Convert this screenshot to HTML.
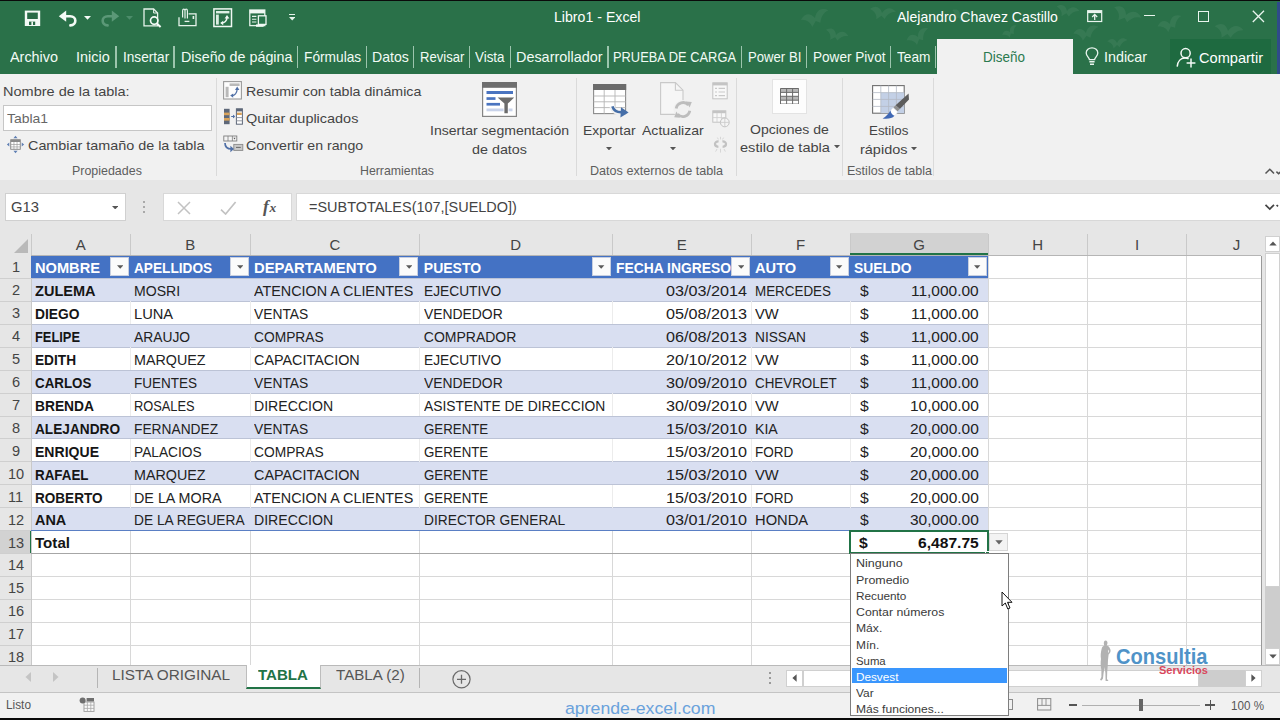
<!DOCTYPE html>
<html lang="es"><head><meta charset="utf-8"><title>Libro1 - Excel</title>
<style>
html,body{margin:0;padding:0;background:#e6e6e6;}
#app{position:relative;width:1280px;height:720px;overflow:hidden;font-family:"Liberation Sans",sans-serif;}
#app div,#app svg,#app .t{position:absolute;}
.t{white-space:nowrap;}
</style></head><body><div id="app">
<div style="left:0.00px;top:0.00px;width:1280.00px;height:720.00px;background:#e6e6e6;"></div>
<div style="left:0.00px;top:0.00px;width:1280.00px;height:74.00px;background:#2a7149;"></div>
<div style="left:0.00px;top:0.00px;width:1280.00px;height:1.20px;background:#0a0a0a;"></div>
<div style="left:0.00px;top:74.00px;width:1280.00px;height:105.50px;background:#f1f1f1;"></div>
<div style="left:937.00px;top:39.00px;width:136.00px;height:36.00px;background:#f1f1f1;"></div>
<div style="left:1170.00px;top:39.00px;width:101.00px;height:35.00px;background:#1e6a40;"></div>
<svg style="left:640.00px;top:1.50px;" width="640" height="72.5" viewBox="0 0 640 72.5"><g fill="#ffffff" fill-opacity="0.06"><path transform="translate(175 16) rotate(-15) scale(1)" d="M-14 -2 C-8 -8 -3 -6 0 0 C3 -7 9 -9 15 -4 C9 -3 6 1 4 6 L0 3 L-5 8 C-5 3 -9 -1 -14 -2 Z"/><path transform="translate(196 33) rotate(20) scale(0.8)" d="M-14 -2 C-8 -8 -3 -6 0 0 C3 -7 9 -9 15 -4 C9 -3 6 1 4 6 L0 3 L-5 8 C-5 3 -9 -1 -14 -2 Z"/><path transform="translate(242 11) rotate(10) scale(0.9)" d="M-14 -2 C-8 -8 -3 -6 0 0 C3 -7 9 -9 15 -4 C9 -3 6 1 4 6 L0 3 L-5 8 C-5 3 -9 -1 -14 -2 Z"/><path transform="translate(278 35) rotate(-25) scale(0.85)" d="M-14 -2 C-8 -8 -3 -6 0 0 C3 -7 9 -9 15 -4 C9 -3 6 1 4 6 L0 3 L-5 8 C-5 3 -9 -1 -14 -2 Z"/><path transform="translate(427 9) rotate(15) scale(0.8)" d="M-14 -2 C-8 -8 -3 -6 0 0 C3 -7 9 -9 15 -4 C9 -3 6 1 4 6 L0 3 L-5 8 C-5 3 -9 -1 -14 -2 Z"/><path transform="translate(446 31) rotate(-10) scale(0.9)" d="M-14 -2 C-8 -8 -3 -6 0 0 C3 -7 9 -9 15 -4 C9 -3 6 1 4 6 L0 3 L-5 8 C-5 3 -9 -1 -14 -2 Z"/><path transform="translate(486 13) rotate(25) scale(1)" d="M-14 -2 C-8 -8 -3 -6 0 0 C3 -7 9 -9 15 -4 C9 -3 6 1 4 6 L0 3 L-5 8 C-5 3 -9 -1 -14 -2 Z"/><path transform="translate(477 41) rotate(0) scale(0.7)" d="M-14 -2 C-8 -8 -3 -6 0 0 C3 -7 9 -9 15 -4 C9 -3 6 1 4 6 L0 3 L-5 8 C-5 3 -9 -1 -14 -2 Z"/><path transform="translate(530 22) rotate(-20) scale(0.9)" d="M-14 -2 C-8 -8 -3 -6 0 0 C3 -7 9 -9 15 -4 C9 -3 6 1 4 6 L0 3 L-5 8 C-5 3 -9 -1 -14 -2 Z"/><path transform="translate(588 29) rotate(12) scale(1)" d="M-14 -2 C-8 -8 -3 -6 0 0 C3 -7 9 -9 15 -4 C9 -3 6 1 4 6 L0 3 L-5 8 C-5 3 -9 -1 -14 -2 Z"/><path transform="translate(320 14) rotate(30) scale(0.7)" d="M-14 -2 C-8 -8 -3 -6 0 0 C3 -7 9 -9 15 -4 C9 -3 6 1 4 6 L0 3 L-5 8 C-5 3 -9 -1 -14 -2 Z"/><path transform="translate(370 30) rotate(-30) scale(0.6)" d="M-14 -2 C-8 -8 -3 -6 0 0 C3 -7 9 -9 15 -4 C9 -3 6 1 4 6 L0 3 L-5 8 C-5 3 -9 -1 -14 -2 Z"/></g></svg>
<span class="t" style="top:9.28px;font-size:14.60px;line-height:17.52px;color:#ffffff;left:553.50px;transform-origin:0 50%;transform:scaleX(0.9690);">Libro1 - Excel</span>
<span class="t" style="top:9.28px;font-size:14.60px;line-height:17.52px;color:#ffffff;left:897.00px;transform-origin:0 50%;transform:scaleX(0.9630);">Alejandro Chavez Castillo</span>
<span class="t" style="top:48.79px;font-size:14.80px;line-height:17.76px;color:#f2fbf5;left:10.00px;transform-origin:0 50%;transform:scaleX(0.9726);">Archivo</span>
<span class="t" style="top:48.79px;font-size:14.80px;line-height:17.76px;color:#f2fbf5;left:76.30px;transform-origin:0 50%;transform:scaleX(0.9754);">Inicio</span>
<span class="t" style="top:48.79px;font-size:14.80px;line-height:17.76px;color:#f2fbf5;left:122.50px;transform-origin:0 50%;transform:scaleX(0.9208);">Insertar</span>
<span class="t" style="top:48.79px;font-size:14.80px;line-height:17.76px;color:#f2fbf5;left:180.50px;transform-origin:0 50%;transform:scaleX(0.9679);">Diseño de página</span>
<span class="t" style="top:48.79px;font-size:14.80px;line-height:17.76px;color:#f2fbf5;left:303.80px;transform-origin:0 50%;transform:scaleX(0.9273);">Fórmulas</span>
<span class="t" style="top:48.79px;font-size:14.80px;line-height:17.76px;color:#f2fbf5;left:372.00px;transform-origin:0 50%;transform:scaleX(0.9518);">Datos</span>
<span class="t" style="top:48.79px;font-size:14.80px;line-height:17.76px;color:#f2fbf5;left:419.50px;transform-origin:0 50%;transform:scaleX(0.8830);">Revisar</span>
<span class="t" style="top:48.79px;font-size:14.80px;line-height:17.76px;color:#f2fbf5;left:475.00px;transform-origin:0 50%;transform:scaleX(0.9039);">Vista</span>
<span class="t" style="top:48.79px;font-size:14.80px;line-height:17.76px;color:#f2fbf5;left:516.00px;transform-origin:0 50%;transform:scaleX(0.9737);">Desarrollador</span>
<span class="t" style="top:48.79px;font-size:14.80px;line-height:17.76px;color:#f2fbf5;left:613.00px;transform-origin:0 50%;transform:scaleX(0.8695);">PRUEBA DE CARGA</span>
<span class="t" style="top:48.79px;font-size:14.80px;line-height:17.76px;color:#f2fbf5;left:747.50px;transform-origin:0 50%;transform:scaleX(0.8876);">Power BI</span>
<span class="t" style="top:48.79px;font-size:14.80px;line-height:17.76px;color:#f2fbf5;left:812.50px;transform-origin:0 50%;transform:scaleX(0.9181);">Power Pivot</span>
<span class="t" style="top:48.79px;font-size:14.80px;line-height:17.76px;color:#f2fbf5;left:896.50px;transform-origin:0 50%;transform:scaleX(0.9256);">Team</span>
<div style="left:115.40px;top:45.50px;width:1.30px;height:22.00px;background:#9cc5ad;"></div>
<div style="left:173.40px;top:45.50px;width:1.30px;height:22.00px;background:#9cc5ad;"></div>
<div style="left:296.90px;top:45.50px;width:1.30px;height:22.00px;background:#9cc5ad;"></div>
<div style="left:365.70px;top:45.50px;width:1.30px;height:22.00px;background:#9cc5ad;"></div>
<div style="left:413.20px;top:45.50px;width:1.30px;height:22.00px;background:#9cc5ad;"></div>
<div style="left:468.90px;top:45.50px;width:1.30px;height:22.00px;background:#9cc5ad;"></div>
<div style="left:509.90px;top:45.50px;width:1.30px;height:22.00px;background:#9cc5ad;"></div>
<div style="left:607.40px;top:45.50px;width:1.30px;height:22.00px;background:#9cc5ad;"></div>
<div style="left:740.90px;top:45.50px;width:1.30px;height:22.00px;background:#9cc5ad;"></div>
<div style="left:805.90px;top:45.50px;width:1.30px;height:22.00px;background:#9cc5ad;"></div>
<div style="left:889.90px;top:45.50px;width:1.30px;height:22.00px;background:#9cc5ad;"></div>
<div style="left:935.00px;top:45.50px;width:1.30px;height:22.00px;background:#9cc5ad;"></div>
<span class="t" style="top:48.79px;font-size:14.80px;line-height:17.76px;color:#2a7a4f;left:983.00px;transform-origin:0 50%;transform:scaleX(0.9116);">Diseño</span>
<span class="t" style="top:48.79px;font-size:14.80px;line-height:17.76px;color:#f2fbf5;left:1104.00px;transform-origin:0 50%;transform:scaleX(0.9680);">Indicar</span>
<span class="t" style="top:50.19px;font-size:14.80px;line-height:17.76px;color:#ffffff;left:1198.80px;transform-origin:0 50%;transform:scaleX(0.9851);">Compartir</span>
<div style="left:1276.50px;top:1.50px;width:3.50px;height:72.50px;background:#2f4b8a;"></div>
<svg style="left:24.00px;top:9.50px;" width="17" height="17" viewBox="0 0 17 17">
<path d="M0.8 0.6 H16.2 V16 H0.8 Z" fill="#f4faf6"/>
<rect x="3.2" y="2.6" width="10.6" height="6.4" fill="#2a6b47"/>
<rect x="5" y="11.6" width="6.2" height="3.4" fill="#2a6b47"/>
<rect x="7.4" y="11.6" width="1.6" height="3.4" fill="#f4faf6"/>
</svg>
<svg style="left:58.00px;top:8.00px;" width="20" height="20" viewBox="0 0 20 20">
<path d="M4 8.2 H12.2 C19 8.2 19 17.4 12.4 17.4" stroke="#f4faf6" stroke-width="2.6" fill="none" stroke-linecap="round"/>
<path d="M0.8 8.2 L8.2 2.6 V13.8 Z" fill="#f4faf6"/>
</svg>
<svg style="left:83.60px;top:15.60px;" width="7" height="4" viewBox="0 0 7 4"><path d="M0 0 H7 L3.5 3.8 Z" fill="#f4faf6"/></svg>
<svg style="left:100.00px;top:8.00px;" width="20" height="20" viewBox="0 0 20 20">
<path d="M16 8.2 H7.8 C1 8.2 1 17.4 7.6 17.4" stroke="#5b9877" stroke-width="2.6" fill="none" stroke-linecap="round"/>
<path d="M19.2 8.2 L11.8 2.6 V13.8 Z" fill="#5b9877"/>
</svg>
<svg style="left:125.60px;top:15.60px;" width="7" height="4" viewBox="0 0 7 4"><path d="M0 0 H7 L3.5 3.8 Z" fill="#4c8c6a"/></svg>
<svg style="left:142.50px;top:8.00px;" width="19" height="20" viewBox="0 0 19 20">
<path d="M1 1 H10.6 L14.6 5 V17.8 H1 Z" fill="none" stroke="#e6f3eb" stroke-width="1.3"/>
<path d="M10.6 1 V5 H14.6" fill="none" stroke="#e6f3eb" stroke-width="1"/>
<circle cx="11.2" cy="12.6" r="3.7" fill="#277349" stroke="#f4faf6" stroke-width="1.7"/>
<path d="M13.8 15.4 L17.6 19" stroke="#f4faf6" stroke-width="2"/>
</svg>
<svg style="left:177.50px;top:8.00px;" width="20" height="19" viewBox="0 0 20 19">
<path d="M1 9.2 V17.6 H18 V5.8 H10.6" fill="none" stroke="#e6f3eb" stroke-width="1.3"/>
<path d="M4.6 9.6 V3 C4.6 0.6 7 0.6 7 3 V10.6 M7 3 C7 0.6 9.4 0.6 9.4 3 V10.6" fill="none" stroke="#e6f3eb" stroke-width="1.2"/>
<path d="M6.6 13.4 H11.4" stroke="#e6f3eb" stroke-width="1.3"/>
<rect x="14.6" y="8" width="1.6" height="3" fill="#e6f3eb"/>
</svg>
<svg style="left:212.50px;top:8.00px;" width="20" height="20" viewBox="0 0 20 20">
<rect x="0.9" y="0.9" width="17.6" height="17.6" fill="none" stroke="#f0f8f3" stroke-width="1.5"/>
<rect x="3" y="3" width="13.4" height="2.4" fill="#dcefe3"/>
<rect x="3" y="6.6" width="2.8" height="10" fill="#dcefe3"/>
<path d="M8.4 15 C11.6 15 14 12.6 14 9.6" stroke="#f0f8f3" stroke-width="1.5" fill="none"/>
<path d="M14 7 L16.4 10.4 H11.6 Z M7.2 15 L10.2 12.8 V17.2 Z" fill="#f0f8f3"/>
</svg>
<svg style="left:248.50px;top:9.00px;" width="19" height="19" viewBox="0 0 19 19">
<rect x="0.8" y="1" width="15" height="15.6" fill="none" stroke="#e6f3eb" stroke-width="1.3"/>
<rect x="0.8" y="1" width="15" height="3.4" fill="#f0f8f3"/>
<path d="M3 7.4 H7.4 M3 10.2 H7.4 M3 13 H7.4" stroke="#e6f3eb" stroke-width="1.1"/>
<rect x="9.4" y="6.8" width="7.6" height="8.6" fill="#277349" stroke="#f0f8f3" stroke-width="1.3"/>
<rect x="7" y="15.4" width="7.6" height="2.4" fill="#f0f8f3"/>
</svg>
<div style="left:289.40px;top:14.20px;width:5.60px;height:1.30px;background:#e6f3eb;"></div>
<svg style="left:289.00px;top:16.80px;" width="6.4" height="4" viewBox="0 0 6.4 4"><path d="M0 0 H6.4 L3.2 3.6 Z" fill="#e6f3eb"/></svg>
<svg style="left:1086.50px;top:10.00px;" width="16" height="13" viewBox="0 0 16 13">
<rect x="0.7" y="0.7" width="14" height="10.8" fill="none" stroke="#e9f5ee" stroke-width="1.2"/>
<rect x="0.7" y="0.7" width="14" height="2.4" fill="#e9f5ee"/>
<path d="M7.7 10 V5 M5.2 7 L7.7 4.4 L10.2 7" stroke="#e9f5ee" stroke-width="1.3" fill="none"/>
</svg>
<div style="left:1144.00px;top:15.10px;width:11.00px;height:1.30px;background:#e9f5ee;"></div>
<div style="left:1198.00px;top:10.80px;width:11.20px;height:10.80px;border:1.3px solid #e9f5ee;box-sizing:border-box;"></div>
<svg style="left:1251.50px;top:10.30px;" width="13" height="13" viewBox="0 0 13 13"><path d="M0.8 0.8 L12 12 M12 0.8 L0.8 12" stroke="#e9f5ee" stroke-width="1.3" fill="none"/></svg>
<svg style="left:1085.00px;top:47.00px;" width="14" height="19" viewBox="0 0 14 19">
<path d="M4.4 12.6 C4.2 10.6 1.2 9.2 1.2 6 C1.2 2.8 3.8 0.9 7 0.9 C10.2 0.9 12.8 2.8 12.8 6 C12.8 9.2 9.8 10.6 9.6 12.6 Z" fill="none" stroke="#e9f5ee" stroke-width="1.3"/>
<path d="M4.4 14.8 H9.6 M5 17.2 H9" stroke="#e9f5ee" stroke-width="1.4"/>
</svg>
<svg style="left:1176.00px;top:46.50px;" width="22" height="22" viewBox="0 0 22 22">
<circle cx="9.6" cy="6.2" r="4.6" fill="none" stroke="#f4faf6" stroke-width="1.5"/>
<path d="M1.2 19.6 C1.6 14 5 11 9 11 C10.4 11 11.6 11.3 12.6 11.9" fill="none" stroke="#f4faf6" stroke-width="1.5"/>
<path d="M15 11.6 V20.4 M10.6 16 H19.4" stroke="#f4faf6" stroke-width="1.5"/>
</svg>
<span class="t" style="top:83.73px;font-size:13.60px;line-height:16.32px;color:#444444;left:3.30px;transform-origin:0 50%;transform:scaleX(1.0675);">Nombre de la tabla:</span>
<div style="left:3.00px;top:104.50px;width:208.50px;height:26.00px;background:#ffffff;border:1px solid #c6c6c6;box-sizing:border-box;"></div>
<span class="t" style="top:110.83px;font-size:13.60px;line-height:16.32px;color:#666;left:6.50px;transform-origin:0 50%;transform:scaleX(1.0255);">Tabla1</span>
<span class="t" style="top:137.53px;font-size:13.60px;line-height:16.32px;color:#444444;left:27.80px;transform-origin:0 50%;transform:scaleX(1.0570);">Cambiar tamaño de la tabla</span>
<span class="t" style="top:164.26px;font-size:12.40px;line-height:14.88px;color:#5e5e5e;left:72.20px;transform-origin:0 50%;transform:scaleX(1.0039);">Propiedades</span>
<div style="left:216.00px;top:78.00px;width:1.00px;height:98.00px;background:#dadada;"></div>
<div style="left:575.80px;top:78.00px;width:1.00px;height:98.00px;background:#dadada;"></div>
<div style="left:735.50px;top:78.00px;width:1.00px;height:98.00px;background:#dadada;"></div>
<div style="left:842.30px;top:78.00px;width:1.00px;height:98.00px;background:#dadada;"></div>
<div style="left:933.30px;top:78.00px;width:1.00px;height:98.00px;background:#dadada;"></div>
<span class="t" style="top:83.83px;font-size:13.60px;line-height:16.32px;color:#444444;left:245.60px;transform-origin:0 50%;transform:scaleX(1.0452);">Resumir con tabla dinámica</span>
<span class="t" style="top:110.53px;font-size:13.60px;line-height:16.32px;color:#444444;left:245.60px;transform-origin:0 50%;transform:scaleX(1.0620);">Quitar duplicados</span>
<span class="t" style="top:137.53px;font-size:13.60px;line-height:16.32px;color:#444444;left:245.60px;transform-origin:0 50%;transform:scaleX(1.0405);">Convertir en rango</span>
<span class="t" style="top:164.26px;font-size:12.40px;line-height:14.88px;color:#5e5e5e;left:359.50px;transform-origin:0 50%;transform:scaleX(0.9943);">Herramientas</span>
<span class="t" style="top:123.33px;font-size:13.60px;line-height:16.32px;color:#444444;left:429.80px;transform-origin:0 50%;transform:scaleX(1.0345);">Insertar segmentación</span>
<span class="t" style="top:142.03px;font-size:13.60px;line-height:16.32px;color:#444444;left:472.00px;transform-origin:0 50%;transform:scaleX(1.0541);">de datos</span>
<span class="t" style="top:123.33px;font-size:13.60px;line-height:16.32px;color:#444444;left:583.00px;transform-origin:0 50%;transform:scaleX(1.0233);">Exportar</span>
<span class="t" style="top:123.33px;font-size:13.60px;line-height:16.32px;color:#444444;left:641.80px;transform-origin:0 50%;transform:scaleX(1.0332);">Actualizar</span>
<span class="t" style="top:164.26px;font-size:12.40px;line-height:14.88px;color:#5e5e5e;left:589.70px;transform-origin:0 50%;transform:scaleX(1.0163);">Datos externos de tabla</span>
<span class="t" style="top:121.83px;font-size:13.60px;line-height:16.32px;color:#444444;left:750.00px;transform-origin:0 50%;transform:scaleX(1.0319);">Opciones de</span>
<span class="t" style="top:140.43px;font-size:13.60px;line-height:16.32px;color:#444444;left:739.70px;transform-origin:0 50%;transform:scaleX(1.0724);">estilo de tabla</span>
<span class="t" style="top:123.33px;font-size:13.60px;line-height:16.32px;color:#444444;left:869.00px;transform-origin:0 50%;transform:scaleX(0.9836);">Estilos</span>
<span class="t" style="top:142.03px;font-size:13.60px;line-height:16.32px;color:#444444;left:860.00px;transform-origin:0 50%;transform:scaleX(1.0649);">rápidos</span>
<span class="t" style="top:164.26px;font-size:12.40px;line-height:14.88px;color:#5e5e5e;left:846.50px;transform-origin:0 50%;transform:scaleX(1.0108);">Estilos de tabla</span>
<div style="left:771.60px;top:78.70px;width:35.20px;height:35.60px;background:#fdfdfd;border:1px solid #e3e3e3;box-sizing:border-box;"></div>
<svg style="left:6.00px;top:135.20px;" width="19" height="19" viewBox="0 0 22 22">
<rect x="5.5" y="5.5" width="11" height="11" fill="#fff" stroke="#7a7a7a" stroke-width="1"/>
<rect x="5.5" y="5.5" width="11" height="2.6" fill="#8a8a8a"/>
<path d="M9.2 8 V16.5 M12.8 8 V16.5 M5.5 11 H16.5 M5.5 13.8 H16.5" stroke="#9a9a9a" stroke-width="0.8" fill="none"/>
<path d="M11 1 L13.4 3.8 H8.6 Z M11 21 L13.4 18.2 H8.6 Z M1 11 L3.8 8.6 V13.4 Z M21 11 L18.2 8.6 V13.4 Z" fill="#5f7fb3"/>
</svg>
<svg style="left:223.00px;top:81.00px;" width="19" height="19" viewBox="0 0 19 19">
<rect x="0.6" y="0.6" width="17.8" height="17.4" fill="#fdfdfd" stroke="#9a9a9a" stroke-width="1.1"/>
<rect x="6.6" y="2.4" width="10" height="2.6" fill="#b9b9b9"/>
<rect x="2.6" y="5.8" width="3" height="10.4" fill="#b9b9b9"/>
<path d="M9 14.6 C11.5 14.4 14 12 14.2 8" stroke="#4f6fa6" stroke-width="1.3" fill="none"/>
<path d="M14.2 5.6 L16.4 9 H12 Z" fill="#4f6fa6"/>
<path d="M7.2 14.6 L10.2 12.4 V16.8 Z" fill="#4f6fa6"/>
</svg>
<svg style="left:223.00px;top:108.00px;" width="20" height="17" viewBox="0 0 20 17">
<rect x="1" y="0.8" width="5.6" height="15.4" fill="#5d6778"/>
<rect x="1" y="4.6" width="5.6" height="2.6" fill="#d8a25a"/>
<rect x="1" y="10" width="5.6" height="2.6" fill="#d8a25a"/>
<path d="M8.2 8.5 H11 M10 7 L11.8 8.5 L10 10" stroke="#4f6fa6" stroke-width="1" fill="none"/>
<rect x="13.4" y="0.8" width="6" height="15.4" fill="#fff" stroke="#5d6778" stroke-width="1"/>
<rect x="13.4" y="0.8" width="6" height="2.6" fill="#5d6778"/>
<rect x="14" y="4.6" width="4.8" height="2.4" fill="#d8a25a"/>
<path d="M13.4 9.6 H19.4 M13.4 12.8 H19.4" stroke="#8a8f99" stroke-width="0.9"/>
</svg>
<svg style="left:223.00px;top:135.00px;" width="21" height="19" viewBox="0 0 21 19">
<rect x="0.8" y="1" width="13" height="5" fill="#f4f4f4" stroke="#7d7d7d" stroke-width="0.9"/>
<path d="M5 1 V6 M9.4 1 V6" stroke="#7d7d7d" stroke-width="0.8"/>
<path d="M10.4 2.8 H12.6 L11.5 4.4 Z" fill="#555"/>
<rect x="10.8" y="9.4" width="9" height="6" fill="#c9c9c9" stroke="#8a8a8a" stroke-width="0.9"/>
<path d="M13 12.4 H17.8" stroke="#6a6a6a" stroke-width="1"/>
<path d="M2 8 C2 12.5 4.5 14 8.4 14" stroke="#4f6fa6" stroke-width="1.7" fill="none"/>
<path d="M7.4 10.8 L11 14 L7.4 17.2 Z" fill="#4f6fa6"/>
</svg>
<svg style="left:482.00px;top:82.00px;" width="35" height="35" viewBox="0 0 35 35">
<rect x="0.6" y="0.6" width="33.8" height="33.8" fill="#fff" stroke="#858585" stroke-width="1.2"/>
<rect x="0" y="0" width="35" height="5.8" fill="#6f6f6f"/>
<rect x="4.5" y="9" width="26.5" height="3" fill="#4a74c0"/>
<rect x="4.5" y="15.2" width="9" height="2.7" fill="#4a74c0"/>
<rect x="4.5" y="20.9" width="13.5" height="2.7" fill="#4a74c0"/>
<rect x="4.5" y="26.5" width="26" height="2.8" fill="#c9d3ea"/>
<path d="M14.2 14.6 H33.4 L26.6 21.8 V32 L21.6 32 V21.8 Z" fill="#fff"/>
<path d="M15.6 15.4 H32.2 L25.8 21.6 V31.2 H22.4 V21.6 Z" fill="#6b6b6b"/>
</svg>
<svg style="left:593.00px;top:84.00px;" width="37" height="35" viewBox="0 0 37 35">
<rect x="0.6" y="0.6" width="32" height="29" fill="#fff" stroke="#8a8a8a" stroke-width="1.1"/>
<rect x="0" y="0" width="33.2" height="6" fill="#6b6b6b"/>
<path d="M11.2 6 V29.6 M22 6 V29.6 M0.6 12 H32.6 M0.6 17.8 H32.6 M0.6 23.6 H32.6" stroke="#b5b5b5" stroke-width="0.9" fill="none"/>
<path d="M17.5 21 H30 V33.5 H17.5 Z" fill="#f1f1f1" opacity="0.0"/>
<path d="M19 22.2 C20.5 27.6 25 29 29.4 28.4" stroke="#f1f1f1" stroke-width="5.2" fill="none"/>
<path d="M19.4 22.4 C20.8 27 25 28.6 29.6 28.2" stroke="#456ea8" stroke-width="2.6" fill="none"/>
<path d="M28 23.2 L35.6 28.6 L27.4 33.6 Z" fill="#456ea8"/>
</svg>
<svg style="left:659.00px;top:81.00px;" width="36" height="38" viewBox="0 0 36 38">
<path d="M1.6 1.6 H16.4 L24 9.2 V33.4 H1.6 Z" fill="#f6f6f6" stroke="#c9c9c9" stroke-width="1.1"/>
<path d="M16.4 1.6 V9.2 H24" fill="none" stroke="#c9c9c9" stroke-width="1.1"/>
<circle cx="24" cy="28.6" r="9.6" fill="#f1f1f1"/>
<path d="M17.2 27.4 A7 7 0 0 1 29.4 24" stroke="#bdbdbd" stroke-width="2.8" fill="none"/>
<path d="M27 20.4 L32.8 21 L30.6 26.6 Z" fill="#bdbdbd"/>
<path d="M30.8 29.8 A7 7 0 0 1 18.6 33.2" stroke="#bdbdbd" stroke-width="2.8" fill="none"/>
<path d="M21 36.8 L15.2 36.2 L17.4 30.6 Z" fill="#bdbdbd"/>
</svg>
<svg style="left:711.50px;top:82.00px;" width="16" height="18" viewBox="0 0 16 18">
<rect x="0.8" y="0.8" width="14.4" height="16" fill="#f8f8f8" stroke="#c4c4c4" stroke-width="1"/>
<rect x="0.8" y="0.8" width="14.4" height="2.6" fill="#c4c4c4"/>
<path d="M3 6.4 H5 M3 10 H5 M3 13.6 H5 M6.6 6.4 H13 M6.6 10 H13 M6.6 13.6 H13" stroke="#c9c9c9" stroke-width="1.1"/>
</svg>
<svg style="left:711.50px;top:110.00px;" width="18" height="18" viewBox="0 0 18 18">
<rect x="0.8" y="0.8" width="13" height="11.4" fill="#f8f8f8" stroke="#c4c4c4" stroke-width="1"/>
<rect x="0.8" y="0.8" width="13" height="2.4" fill="#c4c4c4"/>
<path d="M5 3 V12 M9.4 3 V12 M0.8 7.6 H13.8" stroke="#d0d0d0" stroke-width="0.9"/>
<circle cx="12.8" cy="12.4" r="4.4" fill="#f4f4f4" stroke="#c4c4c4" stroke-width="1"/>
<path d="M8.4 12.4 H17.2 M12.8 8 V16.8" stroke="#c9c9c9" stroke-width="0.8"/>
</svg>
<svg style="left:711.50px;top:136.00px;" width="17" height="18" viewBox="0 0 17 18">
<path d="M6.6 5.4 C2 5 1.6 10.4 6.4 10.8" stroke="#c2c2c2" stroke-width="2.2" fill="none"/>
<path d="M10.4 5.4 C15 5 15.4 10.4 10.6 10.8" stroke="#c2c2c2" stroke-width="2.2" fill="none"/>
<path d="M8.5 0.8 V3.4 M8.5 12.8 V16.6 M5 13 L3.6 15.6 M12 13 L13.4 15.6 M5.4 1.6 L6.4 3.4 M11.6 1.6 L10.6 3.4" stroke="#d2d2d2" stroke-width="0.9"/>
</svg>
<svg style="left:780.00px;top:87.60px;" width="19.2" height="16.6" viewBox="0 0 19.2 16.6">
<rect x="0.5" y="0.5" width="18.2" height="15.6" fill="#fff"/>
<rect x="0.5" y="0.5" width="18.2" height="3.9" fill="#b7b7b7"/>
<rect x="0.5" y="8.3" width="18.2" height="3.9" fill="#b7b7b7"/>
<path d="M0.5 0.5 H18.7 V16.1 H0.5 Z M0.5 4.4 H18.7 M0.5 8.3 H18.7 M0.5 12.2 H18.7 M6.6 0.5 V16.1 M12.6 0.5 V16.1" stroke="#6a6a6a" stroke-width="1" fill="none"/>
</svg>
<svg style="left:871.50px;top:84.50px;" width="38" height="35" viewBox="0 0 38 35">
<rect x="0.6" y="0.6" width="31.6" height="27.6" fill="#fff" stroke="#6f6f6f" stroke-width="1.1"/>
<rect x="8.8" y="7.6" width="23.4" height="20.6" fill="#c3d0e6"/>
<path d="M8.8 0.6 V28.2 M16.6 0.6 V28.2 M24.4 0.6 V28.2 M0.6 7.6 H32.2 M0.6 14.4 H32.2 M0.6 21.4 H32.2" stroke="#b3b9c4" stroke-width="0.8" fill="none"/>
<path d="M36.6 8.6 L37 14.6 L27.8 24 L23.6 20.2 Z" fill="#5c5c5c"/>
<path d="M23.6 20.2 L27.8 24 L25.4 26.6 L21.2 22.8 Z" fill="#8f8f8f"/>
<path d="M21.2 22.8 L25.4 26.6 C24.6 30 22.4 31 20.2 31.4 C17.8 29.6 17.4 25.6 21.2 22.8 Z" fill="#fff" stroke="#dfe5f0" stroke-width="0.6"/>
<path d="M18.4 25.6 C16.6 29 14 31.6 10.6 33.6 C15.6 34.2 20.4 33.6 22.4 30.8 C20.4 30 18.8 28.2 18.4 25.6 Z" fill="#4068b4"/>
</svg>
<svg style="left:606.40px;top:146.90px;" width="6" height="3.4" viewBox="0 0 6 3.4"><path d="M0 0 H6 L3 3.4 Z" fill="#555"/></svg>
<svg style="left:669.60px;top:146.90px;" width="6" height="3.4" viewBox="0 0 6 3.4"><path d="M0 0 H6 L3 3.4 Z" fill="#555"/></svg>
<svg style="left:833.60px;top:144.50px;" width="6" height="3.4" viewBox="0 0 6 3.4"><path d="M0 0 H6 L3 3.4 Z" fill="#555"/></svg>
<svg style="left:911.40px;top:146.50px;" width="6" height="3.4" viewBox="0 0 6 3.4"><path d="M0 0 H6 L3 3.4 Z" fill="#555"/></svg>
<svg style="left:1264.00px;top:166.50px;" width="16" height="8" viewBox="0 0 16 8"><path d="M1.5 6.5 L5.8 2.2 L10 6.5 M12.4 4.6 L14.6 6.8 L16.8 4.6" stroke="#555" stroke-width="1.5" fill="none"/></svg>
<div style="left:5.00px;top:193.00px;width:121.00px;height:28.00px;background:#ffffff;border:1px solid #d0d0d0;box-sizing:border-box;"></div>
<span class="t" style="top:199.06px;font-size:14.20px;line-height:17.04px;color:#444444;left:11.00px;transform-origin:0 50%;transform:scaleX(1.0432);">G13</span>
<div style="left:162.50px;top:193.00px;width:129.50px;height:28.00px;background:#ffffff;border:1px solid #d8d8d8;box-sizing:border-box;"></div>
<div style="left:296.00px;top:193.00px;width:990.00px;height:28.00px;background:#ffffff;border:1px solid #d8d8d8;box-sizing:border-box;"></div>
<span class="t" style="top:199.06px;font-size:14.20px;line-height:17.04px;color:#444444;left:309.00px;transform-origin:0 50%;transform:scaleX(1.0183);">=SUBTOTALES(107,[SUELDO])</span>
<svg style="left:112.00px;top:205.60px;" width="6.4" height="3.6" viewBox="0 0 6.4 3.6"><path d="M0 0 H6.4 L3.2 3.4 Z" fill="#555"/></svg>
<div style="left:143.40px;top:201.20px;width:2.00px;height:2.00px;background:#a9a9a9;"></div>
<div style="left:143.40px;top:206.20px;width:2.00px;height:2.00px;background:#a9a9a9;"></div>
<div style="left:143.40px;top:211.20px;width:2.00px;height:2.00px;background:#a9a9a9;"></div>
<svg style="left:177.00px;top:200.50px;" width="14" height="14" viewBox="0 0 14 14"><path d="M1 1 L13 13 M13 1 L1 13" stroke="#c2c2c2" stroke-width="1.5" fill="none"/></svg>
<svg style="left:219.50px;top:200.50px;" width="17" height="14" viewBox="0 0 17 14"><path d="M1 8.6 L5.6 13 L15.6 1" stroke="#c2c2c2" stroke-width="1.7" fill="none"/></svg>
<span class="t" style="top:196.04px;font-size:17.50px;line-height:21.00px;color:#555;font-style:italic;font-family:'Liberation Serif',serif;left:263.00px;transform-origin:0 50%;font-weight:bold;">f</span>
<span class="t" style="top:199.82px;font-size:13.50px;line-height:16.20px;color:#555;font-style:italic;font-family:'Liberation Serif',serif;left:269.60px;transform-origin:0 50%;font-weight:bold;">x</span>
<svg style="left:1264.00px;top:202.50px;" width="16" height="8" viewBox="0 0 16 8"><path d="M1.5 1.8 L5.8 6 L10 1.8 M12.6 2 L14 3.4" stroke="#444" stroke-width="1.7" fill="none"/></svg>
<div style="left:31.00px;top:255.50px;width:1230.30px;height:409.50px;background:#ffffff;"></div>
<div style="left:850.00px;top:233.00px;width:138.00px;height:21.00px;background:#d2d2d2;"></div>
<div style="left:850.00px;top:253.50px;width:138.00px;height:2.00px;background:#217346;"></div>
<div style="left:0.00px;top:530.66px;width:30.00px;height:22.93px;background:#d2d2d2;"></div>
<div style="left:29.50px;top:530.66px;width:2.00px;height:22.93px;background:#217346;"></div>
<div style="left:30.50px;top:234.00px;width:1.00px;height:21.50px;background:#c9c9c9;"></div>
<div style="left:129.80px;top:234.00px;width:1.00px;height:21.50px;background:#c9c9c9;"></div>
<div style="left:249.80px;top:234.00px;width:1.00px;height:21.50px;background:#c9c9c9;"></div>
<div style="left:419.00px;top:234.00px;width:1.00px;height:21.50px;background:#c9c9c9;"></div>
<div style="left:611.50px;top:234.00px;width:1.00px;height:21.50px;background:#c9c9c9;"></div>
<div style="left:750.80px;top:234.00px;width:1.00px;height:21.50px;background:#c9c9c9;"></div>
<div style="left:849.50px;top:234.00px;width:1.00px;height:21.50px;background:#c9c9c9;"></div>
<div style="left:987.50px;top:234.00px;width:1.00px;height:21.50px;background:#c9c9c9;"></div>
<div style="left:1087.00px;top:234.00px;width:1.00px;height:21.50px;background:#c9c9c9;"></div>
<div style="left:1186.30px;top:234.00px;width:1.00px;height:21.50px;background:#c9c9c9;"></div>
<span class="t" style="top:235.60px;font-size:15.00px;line-height:18.00px;color:#444;left:75.65px;transform-origin:0 50%;">A</span>
<span class="t" style="top:235.60px;font-size:15.00px;line-height:18.00px;color:#444;left:185.30px;transform-origin:0 50%;">B</span>
<span class="t" style="top:235.60px;font-size:15.00px;line-height:18.00px;color:#444;left:329.48px;transform-origin:0 50%;">C</span>
<span class="t" style="top:235.60px;font-size:15.00px;line-height:18.00px;color:#444;left:510.33px;transform-origin:0 50%;">D</span>
<span class="t" style="top:235.60px;font-size:15.00px;line-height:18.00px;color:#444;left:676.65px;transform-origin:0 50%;">E</span>
<span class="t" style="top:235.60px;font-size:15.00px;line-height:18.00px;color:#444;left:796.07px;transform-origin:0 50%;">F</span>
<span class="t" style="top:235.60px;font-size:15.00px;line-height:18.00px;color:#444;left:913.17px;transform-origin:0 50%;">G</span>
<span class="t" style="top:235.60px;font-size:15.00px;line-height:18.00px;color:#444;left:1032.33px;transform-origin:0 50%;">H</span>
<span class="t" style="top:235.60px;font-size:15.00px;line-height:18.00px;color:#444;left:1135.07px;transform-origin:0 50%;">I</span>
<span class="t" style="top:235.60px;font-size:15.00px;line-height:18.00px;color:#444;left:1232.65px;transform-origin:0 50%;">J</span>
<svg style="left:12.00px;top:238.00px;" width="17" height="17" viewBox="0 0 17 17"><path d="M16 1 L16 15 L2 15 Z" fill="#b9b9b9"/></svg>
<div style="left:31.00px;top:255.50px;width:957.00px;height:22.93px;background:#4472c4;"></div>
<div style="left:31.00px;top:278.43px;width:957.00px;height:22.93px;background:#d9dff1;"></div>
<div style="left:31.00px;top:324.29px;width:957.00px;height:22.93px;background:#d9dff1;"></div>
<div style="left:31.00px;top:370.15px;width:957.00px;height:22.93px;background:#d9dff1;"></div>
<div style="left:31.00px;top:416.01px;width:957.00px;height:22.93px;background:#d9dff1;"></div>
<div style="left:31.00px;top:461.87px;width:957.00px;height:22.93px;background:#d9dff1;"></div>
<div style="left:31.00px;top:507.73px;width:957.00px;height:22.93px;background:#d9dff1;"></div>
<div style="left:988.00px;top:277.93px;width:273.30px;height:1.00px;background:#d8d8d8;"></div>
<div style="left:31.00px;top:277.93px;width:957.00px;height:1.00px;background:#bcc3d6;"></div>
<div style="left:988.00px;top:300.86px;width:273.30px;height:1.00px;background:#d8d8d8;"></div>
<div style="left:31.00px;top:300.86px;width:957.00px;height:1.00px;background:#bcc3d6;"></div>
<div style="left:988.00px;top:323.79px;width:273.30px;height:1.00px;background:#d8d8d8;"></div>
<div style="left:31.00px;top:323.79px;width:957.00px;height:1.00px;background:#bcc3d6;"></div>
<div style="left:988.00px;top:346.72px;width:273.30px;height:1.00px;background:#d8d8d8;"></div>
<div style="left:31.00px;top:346.72px;width:957.00px;height:1.00px;background:#bcc3d6;"></div>
<div style="left:988.00px;top:369.65px;width:273.30px;height:1.00px;background:#d8d8d8;"></div>
<div style="left:31.00px;top:369.65px;width:957.00px;height:1.00px;background:#bcc3d6;"></div>
<div style="left:988.00px;top:392.58px;width:273.30px;height:1.00px;background:#d8d8d8;"></div>
<div style="left:31.00px;top:392.58px;width:957.00px;height:1.00px;background:#bcc3d6;"></div>
<div style="left:988.00px;top:415.51px;width:273.30px;height:1.00px;background:#d8d8d8;"></div>
<div style="left:31.00px;top:415.51px;width:957.00px;height:1.00px;background:#bcc3d6;"></div>
<div style="left:988.00px;top:438.44px;width:273.30px;height:1.00px;background:#d8d8d8;"></div>
<div style="left:31.00px;top:438.44px;width:957.00px;height:1.00px;background:#bcc3d6;"></div>
<div style="left:988.00px;top:461.37px;width:273.30px;height:1.00px;background:#d8d8d8;"></div>
<div style="left:31.00px;top:461.37px;width:957.00px;height:1.00px;background:#bcc3d6;"></div>
<div style="left:988.00px;top:484.30px;width:273.30px;height:1.00px;background:#d8d8d8;"></div>
<div style="left:31.00px;top:484.30px;width:957.00px;height:1.00px;background:#bcc3d6;"></div>
<div style="left:988.00px;top:507.23px;width:273.30px;height:1.00px;background:#d8d8d8;"></div>
<div style="left:31.00px;top:507.23px;width:957.00px;height:1.00px;background:#bcc3d6;"></div>
<div style="left:988.00px;top:530.16px;width:273.30px;height:1.00px;background:#d8d8d8;"></div>
<div style="left:31.00px;top:553.09px;width:1230.30px;height:1.00px;background:#d8d8d8;"></div>
<div style="left:31.00px;top:576.02px;width:1230.30px;height:1.00px;background:#d8d8d8;"></div>
<div style="left:31.00px;top:598.95px;width:1230.30px;height:1.00px;background:#d8d8d8;"></div>
<div style="left:31.00px;top:621.88px;width:1230.30px;height:1.00px;background:#d8d8d8;"></div>
<div style="left:31.00px;top:644.81px;width:1230.30px;height:1.00px;background:#d8d8d8;"></div>
<span class="t" style="top:258.40px;font-size:15.00px;line-height:18.00px;color:#444;left:11.75px;transform-origin:0 50%;transform:scaleX(0.9700);">1</span>
<div style="left:0.00px;top:277.93px;width:31.00px;height:1.00px;background:#cfcfcf;"></div>
<span class="t" style="top:281.33px;font-size:15.00px;line-height:18.00px;color:#444;left:11.75px;transform-origin:0 50%;transform:scaleX(0.9700);">2</span>
<div style="left:0.00px;top:300.86px;width:31.00px;height:1.00px;background:#cfcfcf;"></div>
<span class="t" style="top:304.26px;font-size:15.00px;line-height:18.00px;color:#444;left:11.75px;transform-origin:0 50%;transform:scaleX(0.9700);">3</span>
<div style="left:0.00px;top:323.79px;width:31.00px;height:1.00px;background:#cfcfcf;"></div>
<span class="t" style="top:327.19px;font-size:15.00px;line-height:18.00px;color:#444;left:11.75px;transform-origin:0 50%;transform:scaleX(0.9700);">4</span>
<div style="left:0.00px;top:346.72px;width:31.00px;height:1.00px;background:#cfcfcf;"></div>
<span class="t" style="top:350.12px;font-size:15.00px;line-height:18.00px;color:#444;left:11.75px;transform-origin:0 50%;transform:scaleX(0.9700);">5</span>
<div style="left:0.00px;top:369.65px;width:31.00px;height:1.00px;background:#cfcfcf;"></div>
<span class="t" style="top:373.05px;font-size:15.00px;line-height:18.00px;color:#444;left:11.75px;transform-origin:0 50%;transform:scaleX(0.9700);">6</span>
<div style="left:0.00px;top:392.58px;width:31.00px;height:1.00px;background:#cfcfcf;"></div>
<span class="t" style="top:395.98px;font-size:15.00px;line-height:18.00px;color:#444;left:11.75px;transform-origin:0 50%;transform:scaleX(0.9700);">7</span>
<div style="left:0.00px;top:415.51px;width:31.00px;height:1.00px;background:#cfcfcf;"></div>
<span class="t" style="top:418.91px;font-size:15.00px;line-height:18.00px;color:#444;left:11.75px;transform-origin:0 50%;transform:scaleX(0.9700);">8</span>
<div style="left:0.00px;top:438.44px;width:31.00px;height:1.00px;background:#cfcfcf;"></div>
<span class="t" style="top:441.84px;font-size:15.00px;line-height:18.00px;color:#444;left:11.75px;transform-origin:0 50%;transform:scaleX(0.9700);">9</span>
<div style="left:0.00px;top:461.37px;width:31.00px;height:1.00px;background:#cfcfcf;"></div>
<span class="t" style="top:464.77px;font-size:15.00px;line-height:18.00px;color:#444;left:7.71px;transform-origin:0 50%;transform:scaleX(0.9700);">10</span>
<div style="left:0.00px;top:484.30px;width:31.00px;height:1.00px;background:#cfcfcf;"></div>
<span class="t" style="top:487.70px;font-size:15.00px;line-height:18.00px;color:#444;left:8.25px;transform-origin:0 50%;transform:scaleX(0.9700);">11</span>
<div style="left:0.00px;top:507.23px;width:31.00px;height:1.00px;background:#cfcfcf;"></div>
<span class="t" style="top:510.63px;font-size:15.00px;line-height:18.00px;color:#444;left:7.71px;transform-origin:0 50%;transform:scaleX(0.9700);">12</span>
<div style="left:0.00px;top:530.16px;width:31.00px;height:1.00px;background:#cfcfcf;"></div>
<span class="t" style="top:533.56px;font-size:15.00px;line-height:18.00px;color:#444;left:7.71px;transform-origin:0 50%;transform:scaleX(0.9700);">13</span>
<div style="left:0.00px;top:553.09px;width:31.00px;height:1.00px;background:#cfcfcf;"></div>
<span class="t" style="top:556.49px;font-size:15.00px;line-height:18.00px;color:#444;left:7.71px;transform-origin:0 50%;transform:scaleX(0.9700);">14</span>
<div style="left:0.00px;top:576.02px;width:31.00px;height:1.00px;background:#cfcfcf;"></div>
<span class="t" style="top:579.42px;font-size:15.00px;line-height:18.00px;color:#444;left:7.71px;transform-origin:0 50%;transform:scaleX(0.9700);">15</span>
<div style="left:0.00px;top:598.95px;width:31.00px;height:1.00px;background:#cfcfcf;"></div>
<span class="t" style="top:602.35px;font-size:15.00px;line-height:18.00px;color:#444;left:7.71px;transform-origin:0 50%;transform:scaleX(0.9700);">16</span>
<div style="left:0.00px;top:621.88px;width:31.00px;height:1.00px;background:#cfcfcf;"></div>
<span class="t" style="top:625.28px;font-size:15.00px;line-height:18.00px;color:#444;left:7.71px;transform-origin:0 50%;transform:scaleX(0.9700);">17</span>
<div style="left:0.00px;top:644.81px;width:31.00px;height:1.00px;background:#cfcfcf;"></div>
<span class="t" style="top:648.21px;font-size:15.00px;line-height:18.00px;color:#444;left:7.71px;transform-origin:0 50%;transform:scaleX(0.9700);">18</span>
<div style="left:30.50px;top:255.50px;width:1.00px;height:409.50px;background:#c9c9c9;"></div>
<div style="left:129.80px;top:530.66px;width:1.00px;height:134.34px;background:#d8d8d8;"></div>
<div style="left:129.80px;top:301.36px;width:1.00px;height:22.93px;background:#ececec;"></div>
<div style="left:129.80px;top:347.22px;width:1.00px;height:22.93px;background:#ececec;"></div>
<div style="left:129.80px;top:393.08px;width:1.00px;height:22.93px;background:#ececec;"></div>
<div style="left:129.80px;top:438.94px;width:1.00px;height:22.93px;background:#ececec;"></div>
<div style="left:129.80px;top:484.80px;width:1.00px;height:22.93px;background:#ececec;"></div>
<div style="left:249.80px;top:530.66px;width:1.00px;height:134.34px;background:#d8d8d8;"></div>
<div style="left:249.80px;top:301.36px;width:1.00px;height:22.93px;background:#ececec;"></div>
<div style="left:249.80px;top:347.22px;width:1.00px;height:22.93px;background:#ececec;"></div>
<div style="left:249.80px;top:393.08px;width:1.00px;height:22.93px;background:#ececec;"></div>
<div style="left:249.80px;top:438.94px;width:1.00px;height:22.93px;background:#ececec;"></div>
<div style="left:249.80px;top:484.80px;width:1.00px;height:22.93px;background:#ececec;"></div>
<div style="left:419.00px;top:530.66px;width:1.00px;height:134.34px;background:#d8d8d8;"></div>
<div style="left:419.00px;top:301.36px;width:1.00px;height:22.93px;background:#ececec;"></div>
<div style="left:419.00px;top:347.22px;width:1.00px;height:22.93px;background:#ececec;"></div>
<div style="left:419.00px;top:393.08px;width:1.00px;height:22.93px;background:#ececec;"></div>
<div style="left:419.00px;top:438.94px;width:1.00px;height:22.93px;background:#ececec;"></div>
<div style="left:419.00px;top:484.80px;width:1.00px;height:22.93px;background:#ececec;"></div>
<div style="left:611.50px;top:530.66px;width:1.00px;height:134.34px;background:#d8d8d8;"></div>
<div style="left:611.50px;top:301.36px;width:1.00px;height:22.93px;background:#ececec;"></div>
<div style="left:611.50px;top:347.22px;width:1.00px;height:22.93px;background:#ececec;"></div>
<div style="left:611.50px;top:393.08px;width:1.00px;height:22.93px;background:#ececec;"></div>
<div style="left:611.50px;top:438.94px;width:1.00px;height:22.93px;background:#ececec;"></div>
<div style="left:611.50px;top:484.80px;width:1.00px;height:22.93px;background:#ececec;"></div>
<div style="left:750.80px;top:530.66px;width:1.00px;height:134.34px;background:#d8d8d8;"></div>
<div style="left:750.80px;top:301.36px;width:1.00px;height:22.93px;background:#ececec;"></div>
<div style="left:750.80px;top:347.22px;width:1.00px;height:22.93px;background:#ececec;"></div>
<div style="left:750.80px;top:393.08px;width:1.00px;height:22.93px;background:#ececec;"></div>
<div style="left:750.80px;top:438.94px;width:1.00px;height:22.93px;background:#ececec;"></div>
<div style="left:750.80px;top:484.80px;width:1.00px;height:22.93px;background:#ececec;"></div>
<div style="left:849.50px;top:530.66px;width:1.00px;height:134.34px;background:#d8d8d8;"></div>
<div style="left:849.50px;top:301.36px;width:1.00px;height:22.93px;background:#ececec;"></div>
<div style="left:849.50px;top:347.22px;width:1.00px;height:22.93px;background:#ececec;"></div>
<div style="left:849.50px;top:393.08px;width:1.00px;height:22.93px;background:#ececec;"></div>
<div style="left:849.50px;top:438.94px;width:1.00px;height:22.93px;background:#ececec;"></div>
<div style="left:849.50px;top:484.80px;width:1.00px;height:22.93px;background:#ececec;"></div>
<div style="left:987.50px;top:278.43px;width:1.00px;height:386.57px;background:#d8d8d8;"></div>
<div style="left:1087.00px;top:278.43px;width:1.00px;height:386.57px;background:#d8d8d8;"></div>
<div style="left:1186.30px;top:278.43px;width:1.00px;height:386.57px;background:#d8d8d8;"></div>
<div style="left:987.50px;top:255.50px;width:1.00px;height:22.93px;background:#d8d8d8;"></div>
<div style="left:1087.00px;top:255.50px;width:1.00px;height:22.93px;background:#d8d8d8;"></div>
<div style="left:1186.30px;top:255.50px;width:1.00px;height:22.93px;background:#d8d8d8;"></div>
<div style="left:31.00px;top:255.50px;width:957.00px;height:22.43px;background:#4472c4;"></div>
<div style="left:31.00px;top:529.66px;width:957.00px;height:1.60px;background:#5a7fc4;"></div>
<div style="left:31.00px;top:553.09px;width:957.00px;height:1.00px;background:#a6a6a6;"></div>
<div style="left:1260.80px;top:255.50px;width:1.00px;height:409.50px;background:#9a9a9a;"></div>
<div style="left:31.00px;top:255.00px;width:1230.30px;height:1.00px;background:#b5b5b5;"></div>
<div style="left:850.00px;top:253.20px;width:138.00px;height:2.30px;background:#217346;"></div>
<span class="t" style="top:259.55px;font-size:14.00px;line-height:16.80px;color:#fff;font-weight:bold;left:35.00px;transform-origin:0 50%;transform:scaleX(1.0446);">NOMBRE</span>
<span class="t" style="top:259.55px;font-size:14.00px;line-height:16.80px;color:#fff;font-weight:bold;left:134.30px;transform-origin:0 50%;transform:scaleX(0.9760);">APELLIDOS</span>
<span class="t" style="top:259.55px;font-size:14.00px;line-height:16.80px;color:#fff;font-weight:bold;left:254.30px;transform-origin:0 50%;transform:scaleX(1.0587);">DEPARTAMENTO</span>
<span class="t" style="top:259.55px;font-size:14.00px;line-height:16.80px;color:#fff;font-weight:bold;left:423.80px;transform-origin:0 50%;">PUESTO</span>
<span class="t" style="top:259.55px;font-size:14.00px;line-height:16.80px;color:#fff;font-weight:bold;left:616.00px;transform-origin:0 50%;transform:scaleX(0.9900);">FECHA INGRESO</span>
<span class="t" style="top:259.55px;font-size:14.00px;line-height:16.80px;color:#fff;font-weight:bold;left:755.00px;transform-origin:0 50%;transform:scaleX(1.0454);">AUTO</span>
<span class="t" style="top:259.55px;font-size:14.00px;line-height:16.80px;color:#fff;font-weight:bold;left:854.20px;transform-origin:0 50%;transform:scaleX(0.9873);">SUELDO</span>
<div style="left:110.10px;top:256.90px;width:19.20px;height:19.33px;background:#fbfbfb;border:1px solid #c8cfdf;box-sizing:border-box;"></div>
<svg style="left:116.50px;top:265.10px;" width="6.4" height="4" viewBox="0 0 6.4 4"><path d="M0 0.2 L6.4 0.2 L3.2 3.8 Z" fill="#5a5a5a"/></svg>
<div style="left:230.10px;top:256.90px;width:19.20px;height:19.33px;background:#fbfbfb;border:1px solid #c8cfdf;box-sizing:border-box;"></div>
<svg style="left:236.50px;top:265.10px;" width="6.4" height="4" viewBox="0 0 6.4 4"><path d="M0 0.2 L6.4 0.2 L3.2 3.8 Z" fill="#5a5a5a"/></svg>
<div style="left:399.30px;top:256.90px;width:19.20px;height:19.33px;background:#fbfbfb;border:1px solid #c8cfdf;box-sizing:border-box;"></div>
<svg style="left:405.70px;top:265.10px;" width="6.4" height="4" viewBox="0 0 6.4 4"><path d="M0 0.2 L6.4 0.2 L3.2 3.8 Z" fill="#5a5a5a"/></svg>
<div style="left:591.80px;top:256.90px;width:19.20px;height:19.33px;background:#fbfbfb;border:1px solid #c8cfdf;box-sizing:border-box;"></div>
<svg style="left:598.20px;top:265.10px;" width="6.4" height="4" viewBox="0 0 6.4 4"><path d="M0 0.2 L6.4 0.2 L3.2 3.8 Z" fill="#5a5a5a"/></svg>
<div style="left:731.10px;top:256.90px;width:19.20px;height:19.33px;background:#fbfbfb;border:1px solid #c8cfdf;box-sizing:border-box;"></div>
<svg style="left:737.50px;top:265.10px;" width="6.4" height="4" viewBox="0 0 6.4 4"><path d="M0 0.2 L6.4 0.2 L3.2 3.8 Z" fill="#5a5a5a"/></svg>
<div style="left:829.80px;top:256.90px;width:19.20px;height:19.33px;background:#fbfbfb;border:1px solid #c8cfdf;box-sizing:border-box;"></div>
<svg style="left:836.20px;top:265.10px;" width="6.4" height="4" viewBox="0 0 6.4 4"><path d="M0 0.2 L6.4 0.2 L3.2 3.8 Z" fill="#5a5a5a"/></svg>
<div style="left:967.80px;top:256.90px;width:19.20px;height:19.33px;background:#fbfbfb;border:1px solid #c8cfdf;box-sizing:border-box;"></div>
<svg style="left:974.20px;top:265.10px;" width="6.4" height="4" viewBox="0 0 6.4 4"><path d="M0 0.2 L6.4 0.2 L3.2 3.8 Z" fill="#5a5a5a"/></svg>
<span class="t" style="top:283.18px;font-size:14.00px;line-height:16.80px;color:#151515;font-weight:bold;left:35.00px;transform-origin:0 50%;transform:scaleX(1.0390);">ZULEMA</span>
<span class="t" style="top:283.18px;font-size:14.00px;line-height:16.80px;color:#222;left:134.40px;transform-origin:0 50%;transform:scaleX(1.0046);">MOSRI</span>
<span class="t" style="top:283.18px;font-size:14.00px;line-height:16.80px;color:#222;left:254.30px;transform-origin:0 50%;transform:scaleX(1.0249);">ATENCION A CLIENTES</span>
<span class="t" style="top:283.18px;font-size:14.00px;line-height:16.80px;color:#222;left:423.80px;transform-origin:0 50%;transform:scaleX(0.9826);">EJECUTIVO</span>
<span class="t" style="top:283.18px;font-size:14.00px;line-height:16.80px;color:#222;left:666.07px;transform-origin:0 50%;transform:scaleX(1.1550);">03/03/2014</span>
<span class="t" style="top:283.18px;font-size:14.00px;line-height:16.80px;color:#222;left:755.00px;transform-origin:0 50%;transform:scaleX(0.9578);">MERCEDES</span>
<span class="t" style="top:283.18px;font-size:14.00px;line-height:16.80px;color:#222;left:859.50px;transform-origin:0 50%;transform:scaleX(1.1200);">$</span>
<span class="t" style="top:283.18px;font-size:14.00px;line-height:16.80px;color:#222;left:911.12px;transform-origin:0 50%;transform:scaleX(1.1050);">11,000.00</span>
<span class="t" style="top:306.11px;font-size:14.00px;line-height:16.80px;color:#151515;font-weight:bold;left:35.00px;transform-origin:0 50%;transform:scaleX(0.9863);">DIEGO</span>
<span class="t" style="top:306.11px;font-size:14.00px;line-height:16.80px;color:#222;left:134.40px;transform-origin:0 50%;transform:scaleX(1.0470);">LUNA</span>
<span class="t" style="top:306.11px;font-size:14.00px;line-height:16.80px;color:#222;left:254.30px;transform-origin:0 50%;transform:scaleX(0.9859);">VENTAS</span>
<span class="t" style="top:306.11px;font-size:14.00px;line-height:16.80px;color:#222;left:423.80px;transform-origin:0 50%;transform:scaleX(0.9918);">VENDEDOR</span>
<span class="t" style="top:306.11px;font-size:14.00px;line-height:16.80px;color:#222;left:666.07px;transform-origin:0 50%;transform:scaleX(1.1550);">05/08/2013</span>
<span class="t" style="top:306.11px;font-size:14.00px;line-height:16.80px;color:#222;left:755.00px;transform-origin:0 50%;transform:scaleX(1.0509);">VW</span>
<span class="t" style="top:306.11px;font-size:14.00px;line-height:16.80px;color:#222;left:859.50px;transform-origin:0 50%;transform:scaleX(1.1200);">$</span>
<span class="t" style="top:306.11px;font-size:14.00px;line-height:16.80px;color:#222;left:911.12px;transform-origin:0 50%;transform:scaleX(1.1050);">11,000.00</span>
<span class="t" style="top:329.04px;font-size:14.00px;line-height:16.80px;color:#151515;font-weight:bold;left:35.00px;transform-origin:0 50%;transform:scaleX(0.9182);">FELIPE</span>
<span class="t" style="top:329.04px;font-size:14.00px;line-height:16.80px;color:#222;left:134.40px;transform-origin:0 50%;transform:scaleX(0.9879);">ARAUJO</span>
<span class="t" style="top:329.04px;font-size:14.00px;line-height:16.80px;color:#222;left:254.30px;transform-origin:0 50%;transform:scaleX(0.9846);">COMPRAS</span>
<span class="t" style="top:329.04px;font-size:14.00px;line-height:16.80px;color:#222;left:423.80px;transform-origin:0 50%;">COMPRADOR</span>
<span class="t" style="top:329.04px;font-size:14.00px;line-height:16.80px;color:#222;left:666.07px;transform-origin:0 50%;transform:scaleX(1.1550);">06/08/2013</span>
<span class="t" style="top:329.04px;font-size:14.00px;line-height:16.80px;color:#222;left:755.00px;transform-origin:0 50%;transform:scaleX(0.9784);">NISSAN</span>
<span class="t" style="top:329.04px;font-size:14.00px;line-height:16.80px;color:#222;left:859.50px;transform-origin:0 50%;transform:scaleX(1.1200);">$</span>
<span class="t" style="top:329.04px;font-size:14.00px;line-height:16.80px;color:#222;left:911.12px;transform-origin:0 50%;transform:scaleX(1.1050);">11,000.00</span>
<span class="t" style="top:351.97px;font-size:14.00px;line-height:16.80px;color:#151515;font-weight:bold;left:35.00px;transform-origin:0 50%;transform:scaleX(0.9762);">EDITH</span>
<span class="t" style="top:351.97px;font-size:14.00px;line-height:16.80px;color:#222;left:134.40px;transform-origin:0 50%;transform:scaleX(1.0228);">MARQUEZ</span>
<span class="t" style="top:351.97px;font-size:14.00px;line-height:16.80px;color:#222;left:254.30px;transform-origin:0 50%;transform:scaleX(1.0268);">CAPACITACION</span>
<span class="t" style="top:351.97px;font-size:14.00px;line-height:16.80px;color:#222;left:423.80px;transform-origin:0 50%;transform:scaleX(0.9826);">EJECUTIVO</span>
<span class="t" style="top:351.97px;font-size:14.00px;line-height:16.80px;color:#222;left:666.07px;transform-origin:0 50%;transform:scaleX(1.1550);">20/10/2012</span>
<span class="t" style="top:351.97px;font-size:14.00px;line-height:16.80px;color:#222;left:755.00px;transform-origin:0 50%;transform:scaleX(1.0509);">VW</span>
<span class="t" style="top:351.97px;font-size:14.00px;line-height:16.80px;color:#222;left:859.50px;transform-origin:0 50%;transform:scaleX(1.1200);">$</span>
<span class="t" style="top:351.97px;font-size:14.00px;line-height:16.80px;color:#222;left:911.12px;transform-origin:0 50%;transform:scaleX(1.1050);">11,000.00</span>
<span class="t" style="top:374.90px;font-size:14.00px;line-height:16.80px;color:#151515;font-weight:bold;left:35.00px;transform-origin:0 50%;transform:scaleX(0.9524);">CARLOS</span>
<span class="t" style="top:374.90px;font-size:14.00px;line-height:16.80px;color:#222;left:134.40px;transform-origin:0 50%;transform:scaleX(0.9657);">FUENTES</span>
<span class="t" style="top:374.90px;font-size:14.00px;line-height:16.80px;color:#222;left:254.30px;transform-origin:0 50%;transform:scaleX(0.9859);">VENTAS</span>
<span class="t" style="top:374.90px;font-size:14.00px;line-height:16.80px;color:#222;left:423.80px;transform-origin:0 50%;transform:scaleX(0.9918);">VENDEDOR</span>
<span class="t" style="top:374.90px;font-size:14.00px;line-height:16.80px;color:#222;left:666.07px;transform-origin:0 50%;transform:scaleX(1.1550);">30/09/2010</span>
<span class="t" style="top:374.90px;font-size:14.00px;line-height:16.80px;color:#222;left:755.00px;transform-origin:0 50%;transform:scaleX(0.9559);">CHEVROLET</span>
<span class="t" style="top:374.90px;font-size:14.00px;line-height:16.80px;color:#222;left:859.50px;transform-origin:0 50%;transform:scaleX(1.1200);">$</span>
<span class="t" style="top:374.90px;font-size:14.00px;line-height:16.80px;color:#222;left:911.12px;transform-origin:0 50%;transform:scaleX(1.1050);">11,000.00</span>
<span class="t" style="top:397.83px;font-size:14.00px;line-height:16.80px;color:#151515;font-weight:bold;left:35.00px;transform-origin:0 50%;transform:scaleX(0.9851);">BRENDA</span>
<span class="t" style="top:397.83px;font-size:14.00px;line-height:16.80px;color:#222;left:134.40px;transform-origin:0 50%;transform:scaleX(0.9162);">ROSALES</span>
<span class="t" style="top:397.83px;font-size:14.00px;line-height:16.80px;color:#222;left:254.30px;transform-origin:0 50%;transform:scaleX(1.0082);">DIRECCION</span>
<span class="t" style="top:397.83px;font-size:14.00px;line-height:16.80px;color:#222;left:423.80px;transform-origin:0 50%;transform:scaleX(0.9870);">ASISTENTE DE DIRECCION</span>
<span class="t" style="top:397.83px;font-size:14.00px;line-height:16.80px;color:#222;left:666.07px;transform-origin:0 50%;transform:scaleX(1.1550);">30/09/2010</span>
<span class="t" style="top:397.83px;font-size:14.00px;line-height:16.80px;color:#222;left:755.00px;transform-origin:0 50%;transform:scaleX(1.0509);">VW</span>
<span class="t" style="top:397.83px;font-size:14.00px;line-height:16.80px;color:#222;left:859.50px;transform-origin:0 50%;transform:scaleX(1.1200);">$</span>
<span class="t" style="top:397.83px;font-size:14.00px;line-height:16.80px;color:#222;left:909.98px;transform-origin:0 50%;transform:scaleX(1.1050);">10,000.00</span>
<span class="t" style="top:420.76px;font-size:14.00px;line-height:16.80px;color:#151515;font-weight:bold;left:35.00px;transform-origin:0 50%;transform:scaleX(0.9757);">ALEJANDRO</span>
<span class="t" style="top:420.76px;font-size:14.00px;line-height:16.80px;color:#222;left:134.40px;transform-origin:0 50%;transform:scaleX(0.9829);">FERNANDEZ</span>
<span class="t" style="top:420.76px;font-size:14.00px;line-height:16.80px;color:#222;left:254.30px;transform-origin:0 50%;transform:scaleX(0.9859);">VENTAS</span>
<span class="t" style="top:420.76px;font-size:14.00px;line-height:16.80px;color:#222;left:423.80px;transform-origin:0 50%;transform:scaleX(0.9486);">GERENTE</span>
<span class="t" style="top:420.76px;font-size:14.00px;line-height:16.80px;color:#222;left:666.07px;transform-origin:0 50%;transform:scaleX(1.1550);">15/03/2010</span>
<span class="t" style="top:420.76px;font-size:14.00px;line-height:16.80px;color:#222;left:755.00px;transform-origin:0 50%;transform:scaleX(1.0104);">KIA</span>
<span class="t" style="top:420.76px;font-size:14.00px;line-height:16.80px;color:#222;left:859.50px;transform-origin:0 50%;transform:scaleX(1.1200);">$</span>
<span class="t" style="top:420.76px;font-size:14.00px;line-height:16.80px;color:#222;left:909.98px;transform-origin:0 50%;transform:scaleX(1.1050);">20,000.00</span>
<span class="t" style="top:443.69px;font-size:14.00px;line-height:16.80px;color:#151515;font-weight:bold;left:35.00px;transform-origin:0 50%;transform:scaleX(1.0033);">ENRIQUE</span>
<span class="t" style="top:443.69px;font-size:14.00px;line-height:16.80px;color:#222;left:134.40px;transform-origin:0 50%;transform:scaleX(0.9798);">PALACIOS</span>
<span class="t" style="top:443.69px;font-size:14.00px;line-height:16.80px;color:#222;left:254.30px;transform-origin:0 50%;transform:scaleX(0.9846);">COMPRAS</span>
<span class="t" style="top:443.69px;font-size:14.00px;line-height:16.80px;color:#222;left:423.80px;transform-origin:0 50%;transform:scaleX(0.9486);">GERENTE</span>
<span class="t" style="top:443.69px;font-size:14.00px;line-height:16.80px;color:#222;left:666.07px;transform-origin:0 50%;transform:scaleX(1.1550);">15/03/2010</span>
<span class="t" style="top:443.69px;font-size:14.00px;line-height:16.80px;color:#222;left:755.00px;transform-origin:0 50%;transform:scaleX(0.9656);">FORD</span>
<span class="t" style="top:443.69px;font-size:14.00px;line-height:16.80px;color:#222;left:859.50px;transform-origin:0 50%;transform:scaleX(1.1200);">$</span>
<span class="t" style="top:443.69px;font-size:14.00px;line-height:16.80px;color:#222;left:909.98px;transform-origin:0 50%;transform:scaleX(1.1050);">20,000.00</span>
<span class="t" style="top:466.62px;font-size:14.00px;line-height:16.80px;color:#151515;font-weight:bold;left:35.00px;transform-origin:0 50%;transform:scaleX(0.9553);">RAFAEL</span>
<span class="t" style="top:466.62px;font-size:14.00px;line-height:16.80px;color:#222;left:134.40px;transform-origin:0 50%;transform:scaleX(1.0228);">MARQUEZ</span>
<span class="t" style="top:466.62px;font-size:14.00px;line-height:16.80px;color:#222;left:254.30px;transform-origin:0 50%;transform:scaleX(1.0268);">CAPACITACION</span>
<span class="t" style="top:466.62px;font-size:14.00px;line-height:16.80px;color:#222;left:423.80px;transform-origin:0 50%;transform:scaleX(0.9486);">GERENTE</span>
<span class="t" style="top:466.62px;font-size:14.00px;line-height:16.80px;color:#222;left:666.07px;transform-origin:0 50%;transform:scaleX(1.1550);">15/03/2010</span>
<span class="t" style="top:466.62px;font-size:14.00px;line-height:16.80px;color:#222;left:755.00px;transform-origin:0 50%;transform:scaleX(1.0509);">VW</span>
<span class="t" style="top:466.62px;font-size:14.00px;line-height:16.80px;color:#222;left:859.50px;transform-origin:0 50%;transform:scaleX(1.1200);">$</span>
<span class="t" style="top:466.62px;font-size:14.00px;line-height:16.80px;color:#222;left:909.98px;transform-origin:0 50%;transform:scaleX(1.1050);">20,000.00</span>
<span class="t" style="top:489.55px;font-size:14.00px;line-height:16.80px;color:#151515;font-weight:bold;left:35.00px;transform-origin:0 50%;transform:scaleX(0.9678);">ROBERTO</span>
<span class="t" style="top:489.55px;font-size:14.00px;line-height:16.80px;color:#222;left:134.40px;transform-origin:0 50%;transform:scaleX(1.0236);">DE LA MORA</span>
<span class="t" style="top:489.55px;font-size:14.00px;line-height:16.80px;color:#222;left:254.30px;transform-origin:0 50%;transform:scaleX(1.0249);">ATENCION A CLIENTES</span>
<span class="t" style="top:489.55px;font-size:14.00px;line-height:16.80px;color:#222;left:423.80px;transform-origin:0 50%;transform:scaleX(0.9486);">GERENTE</span>
<span class="t" style="top:489.55px;font-size:14.00px;line-height:16.80px;color:#222;left:666.07px;transform-origin:0 50%;transform:scaleX(1.1550);">15/03/2010</span>
<span class="t" style="top:489.55px;font-size:14.00px;line-height:16.80px;color:#222;left:755.00px;transform-origin:0 50%;transform:scaleX(0.9656);">FORD</span>
<span class="t" style="top:489.55px;font-size:14.00px;line-height:16.80px;color:#222;left:859.50px;transform-origin:0 50%;transform:scaleX(1.1200);">$</span>
<span class="t" style="top:489.55px;font-size:14.00px;line-height:16.80px;color:#222;left:909.98px;transform-origin:0 50%;transform:scaleX(1.1050);">20,000.00</span>
<span class="t" style="top:512.48px;font-size:14.00px;line-height:16.80px;color:#151515;font-weight:bold;left:35.00px;transform-origin:0 50%;transform:scaleX(1.0319);">ANA</span>
<span class="t" style="top:512.48px;font-size:14.00px;line-height:16.80px;color:#222;left:134.40px;transform-origin:0 50%;transform:scaleX(0.9803);">DE LA REGUERA</span>
<span class="t" style="top:512.48px;font-size:14.00px;line-height:16.80px;color:#222;left:254.30px;transform-origin:0 50%;transform:scaleX(1.0082);">DIRECCION</span>
<span class="t" style="top:512.48px;font-size:14.00px;line-height:16.80px;color:#222;left:423.80px;transform-origin:0 50%;transform:scaleX(0.9829);">DIRECTOR GENERAL</span>
<span class="t" style="top:512.48px;font-size:14.00px;line-height:16.80px;color:#222;left:666.07px;transform-origin:0 50%;transform:scaleX(1.1550);">03/01/2010</span>
<span class="t" style="top:512.48px;font-size:14.00px;line-height:16.80px;color:#222;left:755.00px;transform-origin:0 50%;transform:scaleX(1.0522);">HONDA</span>
<span class="t" style="top:512.48px;font-size:14.00px;line-height:16.80px;color:#222;left:859.50px;transform-origin:0 50%;transform:scaleX(1.1200);">$</span>
<span class="t" style="top:512.48px;font-size:14.00px;line-height:16.80px;color:#222;left:909.98px;transform-origin:0 50%;transform:scaleX(1.1050);">30,000.00</span>
<span class="t" style="top:535.41px;font-size:14.00px;line-height:16.80px;color:#151515;font-weight:bold;left:35.00px;transform-origin:0 50%;transform:scaleX(1.0801);">Total</span>
<span class="t" style="top:535.41px;font-size:14.00px;line-height:16.80px;color:#151515;font-weight:bold;left:859.30px;transform-origin:0 50%;transform:scaleX(1.1200);">$</span>
<span class="t" style="top:535.41px;font-size:14.00px;line-height:16.80px;color:#111;font-weight:bold;left:918.04px;transform-origin:0 50%;transform:scaleX(1.1150);">6,487.75</span>
<div style="left:849.30px;top:529.86px;width:139.60px;height:24.33px;border:2px solid #217346;box-sizing:border-box;"></div>
<div style="left:984.50px;top:550.59px;width:5.00px;height:5.00px;background:#217346;border:1px solid #fff;box-sizing:border-box;"></div>
<div style="left:989.30px;top:532.80px;width:19.00px;height:18.20px;background:#f3f3f3;border:1px solid #d5d5d5;box-sizing:border-box;"></div>
<svg style="left:995.20px;top:539.50px;" width="8" height="5" viewBox="0 0 8 5"><path d="M0.3 0.3 L7.7 0.3 L4 4.4 Z" fill="#666"/></svg>
<div style="left:1265.00px;top:235.50px;width:15.00px;height:16.50px;background:#ffffff;border:1px solid #d0d0d0;box-sizing:border-box;"></div>
<svg style="left:1269.00px;top:241.00px;" width="8" height="5" viewBox="0 0 8 5"><path d="M0.3 4.6 L7.7 4.6 L4 0.4 Z" fill="#555"/></svg>
<div style="left:1265.00px;top:252.50px;width:15.00px;height:412.00px;background:#cdcdcd;"></div>
<div style="left:1265.00px;top:252.50px;width:15.00px;height:334.50px;background:#ffffff;border:1px solid #d0d0d0;box-sizing:border-box;"></div>
<div style="left:1265.00px;top:648.00px;width:15.00px;height:16.50px;background:#ffffff;border:1px solid #d0d0d0;box-sizing:border-box;"></div>
<svg style="left:1269.00px;top:654.00px;" width="8" height="5" viewBox="0 0 8 5"><path d="M0.3 0.4 L7.7 0.4 L4 4.6 Z" fill="#555"/></svg>
<div style="left:0.00px;top:665.00px;width:1280.00px;height:27.50px;background:#e6e6e6;"></div>
<div style="left:0.00px;top:664.50px;width:1280.00px;height:1.00px;background:#b9b9b9;"></div>
<div style="left:0.00px;top:692.30px;width:1280.00px;height:1.00px;background:#c4c4c4;"></div>
<div style="left:0.00px;top:693.30px;width:1280.00px;height:25.00px;background:#f1f1f1;"></div>
<div style="left:0.00px;top:718.00px;width:1280.00px;height:2.00px;background:#0a0a0a;"></div>
<svg style="left:24.00px;top:671.00px;" width="8" height="12" viewBox="0 0 8 12"><path d="M7 1 L1.5 6 L7 11 Z" fill="#c4c4c4"/></svg>
<svg style="left:52.00px;top:671.00px;" width="8" height="12" viewBox="0 0 8 12"><path d="M1 1 L6.5 6 L1 11 Z" fill="#c4c4c4"/></svg>
<div style="left:97.00px;top:668.00px;width:1.00px;height:20.00px;background:#b5b5b5;"></div>
<div style="left:419.20px;top:668.00px;width:1.00px;height:20.00px;background:#b5b5b5;"></div>
<span class="t" style="top:666.11px;font-size:15.20px;line-height:18.24px;color:#555;left:111.80px;transform-origin:0 50%;transform:scaleX(1.0091);">LISTA ORIGINAL</span>
<div style="left:245.70px;top:665.00px;width:75.30px;height:23.80px;background:#ffffff;border-left:1px solid #bdbdbd;border-right:1px solid #bdbdbd;border-bottom:2px solid #217346;box-sizing:border-box;"></div>
<span class="t" style="top:666.11px;font-size:15.20px;line-height:18.24px;color:#217346;font-weight:bold;left:258.00px;transform-origin:0 50%;transform:scaleX(0.9926);">TABLA</span>
<span class="t" style="top:666.11px;font-size:15.20px;line-height:18.24px;color:#555;left:336.00px;transform-origin:0 50%;transform:scaleX(0.9972);">TABLA (2)</span>
<svg style="left:451.00px;top:668.50px;" width="21" height="21" viewBox="0 0 21 21"><circle cx="10.5" cy="10.3" r="8.6" fill="none" stroke="#6a6a6a" stroke-width="1.2"/><path d="M10.5 5.8 V14.8 M6 10.3 H15" stroke="#6a6a6a" stroke-width="1.3" fill="none"/></svg>
<div style="left:769.00px;top:671.50px;width:2.00px;height:2.00px;background:#9a9a9a;"></div>
<div style="left:769.00px;top:676.50px;width:2.00px;height:2.00px;background:#9a9a9a;"></div>
<div style="left:769.00px;top:681.50px;width:2.00px;height:2.00px;background:#9a9a9a;"></div>
<div style="left:786.00px;top:669.50px;width:17.00px;height:17.50px;background:#ffffff;border:1px solid #d0d0d0;box-sizing:border-box;"></div>
<svg style="left:792.00px;top:674.00px;" width="5" height="8" viewBox="0 0 5 8"><path d="M4.6 0.3 L4.6 7.7 L0.4 4 Z" fill="#555"/></svg>
<div style="left:803.00px;top:669.50px;width:441.50px;height:17.50px;background:#cdcdcd;"></div>
<div style="left:803.00px;top:669.50px;width:396.00px;height:17.50px;background:#ffffff;border:1px solid #d0d0d0;box-sizing:border-box;"></div>
<div style="left:1244.50px;top:669.50px;width:17.00px;height:17.50px;background:#ffffff;border:1px solid #d0d0d0;box-sizing:border-box;"></div>
<svg style="left:1250.50px;top:674.00px;" width="5" height="8" viewBox="0 0 5 8"><path d="M0.4 0.3 L0.4 7.7 L4.6 4 Z" fill="#555"/></svg>
<span class="t" style="top:697.43px;font-size:13.60px;line-height:16.32px;color:#555;left:6.00px;transform-origin:0 50%;transform:scaleX(0.8702);">Listo</span>
<span class="t" style="top:697.72px;font-size:17.20px;line-height:20.64px;color:#6aa2dc;left:564.50px;transform-origin:0 50%;transform:scaleX(1.0288);">aprende-excel.com</span>
<span class="t" style="top:697.62px;font-size:13.40px;line-height:16.08px;color:#555;left:1231.00px;transform-origin:0 50%;transform:scaleX(0.8685);">100 %</span>
<div style="left:1082.00px;top:704.50px;width:118.00px;height:1.00px;background:#b0b0b0;"></div>
<div style="left:1139.00px;top:698.60px;width:4.30px;height:12.20px;background:#666;"></div>
<div style="left:1069.00px;top:704.20px;width:8.00px;height:1.60px;background:#555;"></div>
<div style="left:1205.30px;top:704.20px;width:10.20px;height:1.60px;background:#555;"></div>
<div style="left:1209.60px;top:699.90px;width:1.60px;height:10.20px;background:#555;"></div>
<svg style="left:79.00px;top:697.00px;" width="16" height="15" viewBox="0 0 16 15">
<rect x="5" y="5" width="10" height="9.4" fill="#fafafa" stroke="#9a9a9a" stroke-width="0.9"/>
<path d="M8.4 5 V14.4 M11.8 5 V14.4 M5 8.2 H15 M5 11.4 H15" stroke="#a9a9a9" stroke-width="0.8"/>
<rect x="7.6" y="1" width="7.4" height="3.4" fill="#6f6f6f"/>
<circle cx="3.6" cy="3.4" r="3" fill="#6f6f6f"/>
</svg>
<svg style="left:1037.00px;top:698.00px;" width="15" height="13" viewBox="0 0 15 13">
<rect x="0.6" y="0.6" width="13.2" height="11.4" fill="none" stroke="#8a8a8a" stroke-width="1"/>
<path d="M5 0.6 V7.4 M9 0.6 V7.4 M0.6 7.4 H13.8" stroke="#8a8a8a" stroke-width="0.9" fill="none"/>
</svg>
<div style="left:1008.50px;top:698.50px;width:4.00px;height:11.40px;border:1px solid #8a8a8a;border-left:none;box-sizing:border-box;"></div>
<span class="t" style="top:644.16px;font-size:21.60px;line-height:25.92px;color:#4f93c8;font-weight:bold;left:1116.00px;transform-origin:0 50%;transform:scaleX(0.9298);">Consultia</span>
<span class="t" style="top:663.80px;font-size:11.20px;line-height:13.44px;color:#d9475c;font-weight:bold;left:1159.00px;transform-origin:0 50%;transform:scaleX(0.9837);">Servicios</span>
<svg style="left:1097.00px;top:640.00px;" width="16" height="42" viewBox="0 0 16 42"><path d="M8.5 0.5 C10 0.5 10.8 2 10.4 3.6 C10.2 4.6 9.8 5 9.8 5.6 C11.6 6.2 12.6 7.2 13.4 9.5 C14 11.2 13.4 12.6 11.6 14.6 L11 20 C11 24 10.6 28 10.2 32 L10 39 L11.5 41 L8.6 41 L8.4 33 L7.6 27 L6.6 33 L6 38.5 L4.6 40.5 L3 40 L4.4 37 L4.4 30 C3.6 26 3.4 22 4 19 C3.4 16 3.8 12 4.6 9 C5 7 6.2 6 7.4 5.6 C6.6 4.4 6.4 0.6 8.5 0.5 Z M11.2 9.4 L11.2 13 C12.2 12 12.4 10.6 11.2 9.4 Z" fill="#b2b2b2" fill-rule="evenodd"/></svg>
<div style="left:850.00px;top:553.20px;width:158.80px;height:162.60px;background:#ffffff;border:1px solid #7e7e7e;box-sizing:border-box;"></div>
<span class="t" style="top:556.43px;font-size:11.80px;line-height:14.16px;color:#3a3a3a;left:855.60px;transform-origin:0 50%;transform:scaleX(1.0601);">Ninguno</span>
<span class="t" style="top:572.65px;font-size:11.80px;line-height:14.16px;color:#3a3a3a;left:855.60px;transform-origin:0 50%;transform:scaleX(1.0534);">Promedio</span>
<span class="t" style="top:588.87px;font-size:11.80px;line-height:14.16px;color:#3a3a3a;left:855.60px;transform-origin:0 50%;transform:scaleX(0.9977);">Recuento</span>
<span class="t" style="top:605.09px;font-size:11.80px;line-height:14.16px;color:#3a3a3a;left:855.60px;transform-origin:0 50%;transform:scaleX(1.0448);">Contar números</span>
<span class="t" style="top:621.31px;font-size:11.80px;line-height:14.16px;color:#3a3a3a;left:855.60px;transform-origin:0 50%;transform:scaleX(1.0285);">Máx.</span>
<span class="t" style="top:637.53px;font-size:11.80px;line-height:14.16px;color:#3a3a3a;left:855.60px;transform-origin:0 50%;transform:scaleX(1.0109);">Mín.</span>
<span class="t" style="top:653.75px;font-size:11.80px;line-height:14.16px;color:#3a3a3a;left:855.60px;transform-origin:0 50%;transform:scaleX(0.9635);">Suma</span>
<div style="left:851.60px;top:667.80px;width:155.40px;height:15.60px;background:#3a96fd;"></div>
<span class="t" style="top:669.97px;font-size:11.80px;line-height:14.16px;color:#ffffff;left:855.60px;transform-origin:0 50%;transform:scaleX(0.9947);">Desvest</span>
<span class="t" style="top:686.19px;font-size:11.80px;line-height:14.16px;color:#3a3a3a;left:855.60px;transform-origin:0 50%;transform:scaleX(1.0121);">Var</span>
<span class="t" style="top:702.41px;font-size:11.80px;line-height:14.16px;color:#3a3a3a;left:855.60px;transform-origin:0 50%;transform:scaleX(1.0219);">Más funciones...</span>
<svg style="left:1000.50px;top:590.50px;" width="13" height="20" viewBox="0 0 13 20"><path d="M1 1 L1 15 L4.3 12 L6.8 18 L9 17 L6.5 11.3 L11 11.3 Z" fill="#fff" stroke="#111" stroke-width="1"/></svg>
</div></body></html>
